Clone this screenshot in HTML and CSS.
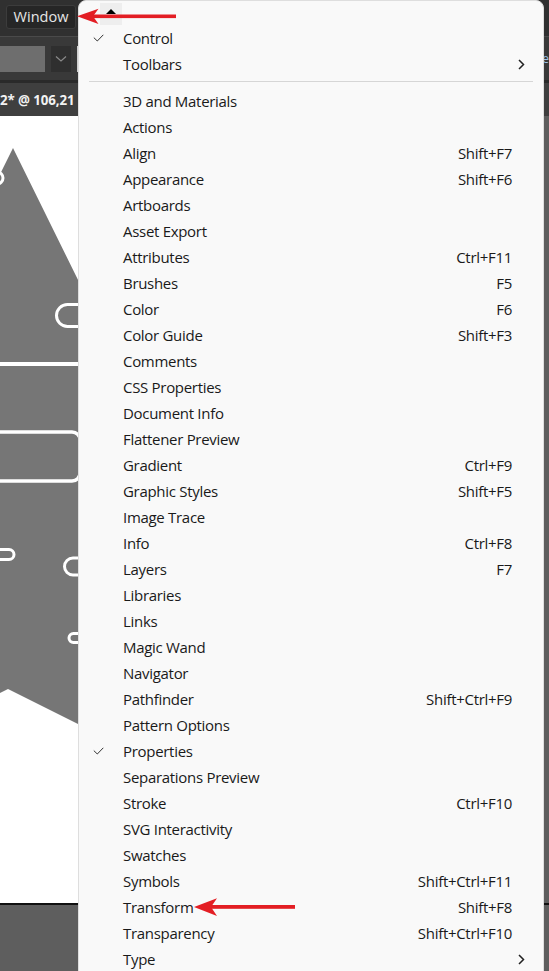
FILE: index.html
```html
<!DOCTYPE html>
<html>
<head>
<meta charset="utf-8">
<link rel="stylesheet" href="styles.css">
</head>
<body>
<div class="app">
  <div class="topbar">
    <div class="window-btn">Window</div>
  </div>
  <div class="controlbar">
    <div class="field"></div>
    <div class="drop"><svg width="12" height="8" viewBox="0 0 12 8"><path d="M1 1.5 L6 6 L11 1.5" fill="none" stroke="#8a8a8a" stroke-width="1.2"/></svg></div>
    <div class="field2"></div>
    <span class="side-text">e</span>
  </div>
  <div class="tabbar"><span class="tab">2* @ 106,21</span></div>
  <div class="workarea">
    <svg class="canvas" width="544" height="787" viewBox="0 116 544 787">
      <rect x="0" y="116" width="544" height="787" fill="#ffffff"/>
      <polygon points="-30,235 13,148 82,288 82,726 8,689 -30,708" fill="#767676"/>
      <g fill="none" stroke="#ffffff" stroke-width="3">
        <circle cx="-3" cy="178" r="6"/>
        <rect x="56.5" y="304.5" width="40" height="22" rx="11"/>
        <line x1="-5" y1="364" x2="90" y2="364" stroke-width="4"/>
        <rect x="-20" y="432" width="100" height="49" rx="8" stroke-width="3.5"/>
        <rect x="-20" y="549.5" width="34" height="10" rx="5"/>
        <rect x="64.5" y="558" width="40" height="17" rx="8.5"/>
        <rect x="69" y="633.5" width="30" height="9" rx="4.5"/>
      </g>
    </svg>
    <div class="side-panel"></div>
  </div>
  <div class="bottom"></div>
</div>

<div class="menu">
  <div class="scroll-up"><span class="tri"></span></div>
  <div class="item"><span class="chk"><svg width="11" height="8" viewBox="0 0 11 8"><path d="M0.8 3.6 L4.3 7 L10.3 0.8" fill="none" stroke="#333" stroke-width="1"/></svg></span><span class="label">Control</span><span class="key"></span><span class="sub"></span></div>
  <div class="item"><span class="chk"></span><span class="label">Toolbars</span><span class="key"></span><span class="sub"><svg width="7" height="11" viewBox="0 0 7 11"><path d="M1 1 L5.5 5.5 L1 10" fill="none" stroke="#222" stroke-width="1.5"/></svg></span></div>
  <div class="sep"></div>
  <div class="item"><span class="chk"></span><span class="label">3D and Materials</span><span class="key"></span><span class="sub"></span></div>
  <div class="item"><span class="chk"></span><span class="label">Actions</span><span class="key"></span><span class="sub"></span></div>
  <div class="item"><span class="chk"></span><span class="label">Align</span><span class="key">Shift+F7</span><span class="sub"></span></div>
  <div class="item"><span class="chk"></span><span class="label">Appearance</span><span class="key">Shift+F6</span><span class="sub"></span></div>
  <div class="item"><span class="chk"></span><span class="label">Artboards</span><span class="key"></span><span class="sub"></span></div>
  <div class="item"><span class="chk"></span><span class="label">Asset Export</span><span class="key"></span><span class="sub"></span></div>
  <div class="item"><span class="chk"></span><span class="label">Attributes</span><span class="key">Ctrl+F11</span><span class="sub"></span></div>
  <div class="item"><span class="chk"></span><span class="label">Brushes</span><span class="key">F5</span><span class="sub"></span></div>
  <div class="item"><span class="chk"></span><span class="label">Color</span><span class="key">F6</span><span class="sub"></span></div>
  <div class="item"><span class="chk"></span><span class="label">Color Guide</span><span class="key">Shift+F3</span><span class="sub"></span></div>
  <div class="item"><span class="chk"></span><span class="label">Comments</span><span class="key"></span><span class="sub"></span></div>
  <div class="item"><span class="chk"></span><span class="label">CSS Properties</span><span class="key"></span><span class="sub"></span></div>
  <div class="item"><span class="chk"></span><span class="label">Document Info</span><span class="key"></span><span class="sub"></span></div>
  <div class="item"><span class="chk"></span><span class="label">Flattener Preview</span><span class="key"></span><span class="sub"></span></div>
  <div class="item"><span class="chk"></span><span class="label">Gradient</span><span class="key">Ctrl+F9</span><span class="sub"></span></div>
  <div class="item"><span class="chk"></span><span class="label">Graphic Styles</span><span class="key">Shift+F5</span><span class="sub"></span></div>
  <div class="item"><span class="chk"></span><span class="label">Image Trace</span><span class="key"></span><span class="sub"></span></div>
  <div class="item"><span class="chk"></span><span class="label">Info</span><span class="key">Ctrl+F8</span><span class="sub"></span></div>
  <div class="item"><span class="chk"></span><span class="label">Layers</span><span class="key">F7</span><span class="sub"></span></div>
  <div class="item"><span class="chk"></span><span class="label">Libraries</span><span class="key"></span><span class="sub"></span></div>
  <div class="item"><span class="chk"></span><span class="label">Links</span><span class="key"></span><span class="sub"></span></div>
  <div class="item"><span class="chk"></span><span class="label">Magic Wand</span><span class="key"></span><span class="sub"></span></div>
  <div class="item"><span class="chk"></span><span class="label">Navigator</span><span class="key"></span><span class="sub"></span></div>
  <div class="item"><span class="chk"></span><span class="label">Pathfinder</span><span class="key">Shift+Ctrl+F9</span><span class="sub"></span></div>
  <div class="item"><span class="chk"></span><span class="label">Pattern Options</span><span class="key"></span><span class="sub"></span></div>
  <div class="item"><span class="chk"><svg width="11" height="8" viewBox="0 0 11 8"><path d="M0.8 3.6 L4.3 7 L10.3 0.8" fill="none" stroke="#333" stroke-width="1"/></svg></span><span class="label">Properties</span><span class="key"></span><span class="sub"></span></div>
  <div class="item"><span class="chk"></span><span class="label">Separations Preview</span><span class="key"></span><span class="sub"></span></div>
  <div class="item"><span class="chk"></span><span class="label">Stroke</span><span class="key">Ctrl+F10</span><span class="sub"></span></div>
  <div class="item"><span class="chk"></span><span class="label">SVG Interactivity</span><span class="key"></span><span class="sub"></span></div>
  <div class="item"><span class="chk"></span><span class="label">Swatches</span><span class="key"></span><span class="sub"></span></div>
  <div class="item"><span class="chk"></span><span class="label">Symbols</span><span class="key">Shift+Ctrl+F11</span><span class="sub"></span></div>
  <div class="item"><span class="chk"></span><span class="label">Transform</span><span class="key">Shift+F8</span><span class="sub"></span></div>
  <div class="item"><span class="chk"></span><span class="label">Transparency</span><span class="key">Shift+Ctrl+F10</span><span class="sub"></span></div>
  <div class="item"><span class="chk"></span><span class="label">Type</span><span class="key"></span><span class="sub"><svg width="7" height="11" viewBox="0 0 7 11"><path d="M1 1 L5.5 5.5 L1 10" fill="none" stroke="#222" stroke-width="1.5"/></svg></span></div>
</div>

<svg class="arrow arrow-top" width="102" height="22" viewBox="76 6 102 22">
  <rect x="92" y="14.5" width="84" height="3.6" fill="#e31e24"/>
  <polygon points="77,16.3 98.5,8.8 93,16.3 98.5,24" fill="#e31e24"/>
</svg>
<svg class="arrow arrow-bottom" width="106" height="22" viewBox="192 896 106 22">
  <rect x="209" y="905" width="86" height="3.8" fill="#e31e24"/>
  <polygon points="194,907 217,898.3 211,907 217,916" fill="#e31e24"/>
</svg>
</body>
</html>
```

FILE: styles.css
```css
html, body {
  margin: 0;
  padding: 0;
}
body {
  width: 549px;
  height: 971px;
  overflow: hidden;
  position: relative;
  background: #5e5e5e;
  font-family: "Open Sans", "Noto Sans", sans-serif;
}
.app {
  display: flex;
  flex-direction: column;
  width: 549px;
  height: 971px;
}
.topbar {
  height: 37px;
  background: #303030;
  border-bottom: 1px solid #4a4a4a;
  display: flex;
  align-items: flex-start;
  box-sizing: border-box;
}
.window-btn {
  margin: 5px 0 0 6px;
  width: 70px;
  height: 24px;
  box-sizing: border-box;
  background: #262626;
  border: 1px solid #3c3c3c;
  border-radius: 3px;
  color: #e6e6e6;
  font-size: 14.5px;
  line-height: 22px;
  text-align: center;
}
.controlbar {
  height: 43px;
  background: #393939;
  display: flex;
  align-items: center;
  gap: 0;
}
.field {
  width: 45px;
  height: 26px;
  background: #6e6e6e;
}
.drop {
  width: 20px;
  height: 26px;
  margin-left: 6px;
  background: #2f2f2f;
  display: flex;
  align-items: center;
  justify-content: center;
}
.field2 {
  width: 3px;
  height: 26px;
  margin-left: 6px;
  background: #cfcfcf;
}
.side-text {
  margin-left: auto;
  margin-right: 0;
  color: #9fc3e6;
  font-size: 12px;
}
.tabbar {
  height: 36px;
  background: #3f3f3f;
  border-top: 3px solid #2a2a2a;
  box-sizing: border-box;
  display: flex;
  align-items: center;
}
.tab {
  margin-left: 0;
  color: #f2f2f2;
  font-weight: bold;
  font-size: 13.3px;
  letter-spacing: -0.1px;
}
.workarea {
  height: 787px;
  display: flex;
}
.canvas {
  display: block;
  flex: none;
}
.side-panel {
  flex: 1;
  background: #5e5e5e;
}
.bottom {
  flex: 1;
  background: #5e5e5e;
  border-top: 2px solid #111;
}

.menu {
  position: absolute;
  left: 78px;
  top: 0;
  width: 466px;
  height: 990px;
  box-sizing: border-box;
  background: #f9f9f9;
  border: 1px solid #dedede;
  border-radius: 8px 8px 0 0;
  padding-top: 0;
  color: #1a1a1a;
  font-size: 15px;
  letter-spacing: -0.3px;
}
.scroll-up {
  width: 22px;
  height: 22px;
  margin: 2px 0 0 21px;
  background: #eeeeee;
  display: flex;
  justify-content: center;
}
.tri {
  margin-top: 6px;
  width: 0;
  height: 0;
  border-left: 5px solid transparent;
  border-right: 5px solid transparent;
  border-bottom: 5px solid #000;
}
.item {
  height: 26px;
  display: grid;
  grid-template-columns: 44px 1fr auto 31px;
  align-items: center;
  white-space: nowrap;
}
.chk {
  padding-left: 14px;
  display: flex;
  align-items: center;
  height: 26px;
}
.key {
  text-align: right;
}
.sub {
  padding-left: 6px;
  display: flex;
  align-items: center;
  height: 26px;
}
.sep {
  height: 1px;
  margin: 4px 10px 6px 10px;
  background: #d6d6d6;
}
.arrow {
  position: absolute;
}
.arrow-top {
  left: 76px;
  top: 6px;
}
.arrow-bottom {
  left: 192px;
  top: 896px;
}
```
